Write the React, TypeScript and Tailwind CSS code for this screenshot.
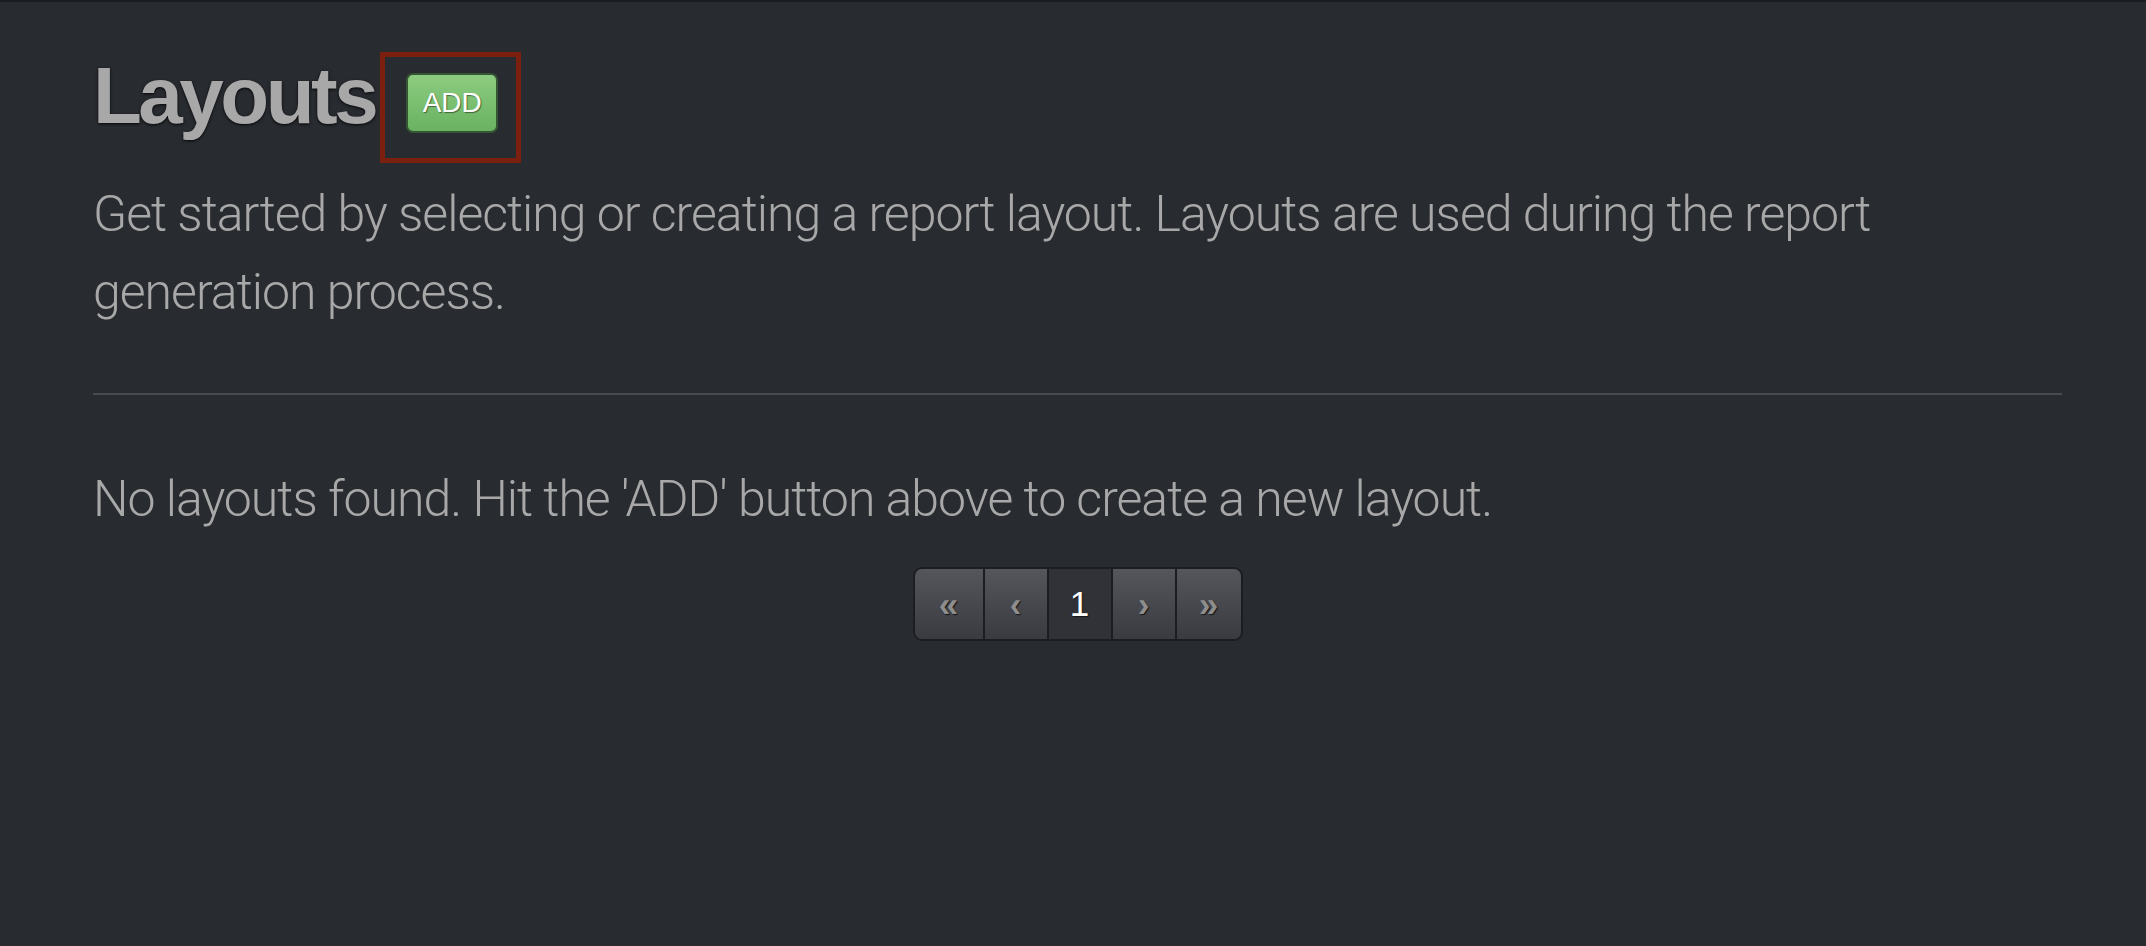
import React from "react";

function Pager() {
  const cell =
    "flex items-center justify-center h-full bg-gradient-to-b from-[#54565b] to-[#393b40] text-[#8e8e8e] font-bold text-[35px] [text-shadow:1px_1px_1px_rgba(0,0,0,0.7)]";
  return (
    <div className="flex h-[74px] border-2 border-[#1c1d20] rounded-[9px] overflow-hidden font-['Liberation_Sans',Arial,sans-serif]">
      <span className={cell + " w-[68px]"}>«</span>
      <span className={cell + " w-[64px] border-l-2 border-[#1c1d20]"}>‹</span>
      <span className="flex items-center justify-center h-full w-[64px] border-l-2 border-[#1c1d20] bg-[#303237] text-white text-[35px] [text-shadow:1px_1px_1px_rgba(0,0,0,0.6)]">
        1
      </span>
      <span className={cell + " w-[64px] border-l-2 border-[#1c1d20]"}>›</span>
      <span className={cell + " w-[66px] border-l-2 border-[#1c1d20]"}>»</span>
    </div>
  );
}

export default function App() {
  return (
    <div className="min-h-[946px] bg-[#282b30] border-t-2 border-[#1c1d20] pl-[93px] pr-[84px] pt-[50px]">
      <div className="flex items-start">
        <h1 className="mt-[4px] text-[80px] leading-none font-bold tracking-[-3.5px] text-[#a8a8a8] font-['Liberation_Sans',Arial,sans-serif] [text-shadow:0_1px_3px_rgba(0,0,0,0.9)]">
          Layouts
        </h1>
        <span className="ml-[5px] border-[5px] border-[#7b1f0f] pt-[16px] pl-[21px] pr-[18px] pb-[25px]">
          <button className="flex items-center justify-center w-[92px] h-[60px] rounded-[7px] border-2 border-[#355632] bg-gradient-to-b from-[#8ccc80] to-[#6ab262] text-white text-[28px] font-['Liberation_Sans',Arial,sans-serif] [text-shadow:1px_1px_1px_rgba(0,0,0,0.45)]">
            ADD
          </button>
        </span>
      </div>
      <p className="mt-[12px] text-[50px] leading-[78px] font-light tracking-[-1px] text-[#a8a8a8] font-['Roboto',sans-serif]">
        Get started by selecting or creating a report layout. Layouts are used
        during the report generation process.
      </p>
      <hr className="mt-[62px] border-0 h-[2px] bg-[#4a4b4f]" />
      <p className="mt-[70px] text-[50px] leading-[69px] font-light tracking-[-1px] text-[#a8a8a8] font-['Roboto',sans-serif]">
        No layouts found. Hit the 'ADD' button above to create a new layout.
      </p>
      <div className="mt-[33px] flex justify-center">
        <Pager />
      </div>
    </div>
  );
}
